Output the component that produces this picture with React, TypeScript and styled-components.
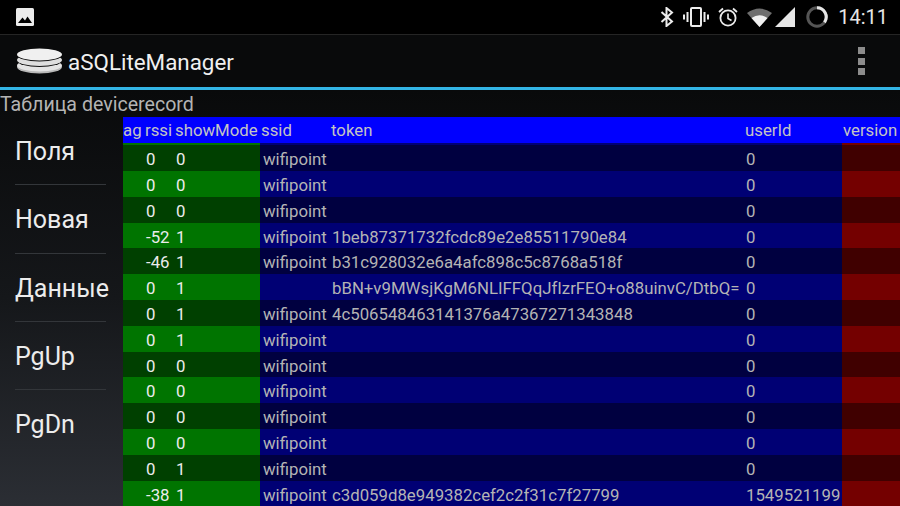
import React from 'react';
import styled, { createGlobalStyle } from 'styled-components';

const GlobalStyle = createGlobalStyle`
  html, body {
    margin: 0;
    padding: 0;
    background: #000;
  }
  body {
    font-family: Roboto, "Noto Sans", sans-serif;
    overflow: hidden;
  }
`;

type Tone = 'green' | 'blue' | 'red';

const COLOURS: Record<Tone, { dark: string; light: string }> = {
  green: { dark: '#004000', light: '#007400' },
  blue: { dark: '#000040', light: '#000074' },
  red: { dark: '#400000', light: '#740000' },
};

const COLUMNS = '21px 31px 85px 70px 414px 98px 58px';

const rows = [
  { rssi: '0', show: '0', ssid: 'wifipoint', token: '', user: '0' },
  { rssi: '0', show: '0', ssid: 'wifipoint', token: '', user: '0' },
  { rssi: '0', show: '0', ssid: 'wifipoint', token: '', user: '0' },
  { rssi: '-52', show: '1', ssid: 'wifipoint', token: '1beb87371732fcdc89e2e85511790e84', user: '0' },
  { rssi: '-46', show: '1', ssid: 'wifipoint', token: 'b31c928032e6a4afc898c5c8768a518f', user: '0' },
  { rssi: '0', show: '1', ssid: '', token: 'bBN+v9MWsjKgM6NLIFFQqJfIzrFEO+o88uinvC/DtbQ=', user: '0' },
  { rssi: '0', show: '1', ssid: 'wifipoint', token: '4c506548463141376a47367271343848', user: '0' },
  { rssi: '0', show: '1', ssid: 'wifipoint', token: '', user: '0' },
  { rssi: '0', show: '0', ssid: 'wifipoint', token: '', user: '0' },
  { rssi: '0', show: '0', ssid: 'wifipoint', token: '', user: '0' },
  { rssi: '0', show: '0', ssid: 'wifipoint', token: '', user: '0' },
  { rssi: '0', show: '0', ssid: 'wifipoint', token: '', user: '0' },
  { rssi: '0', show: '1', ssid: 'wifipoint', token: '', user: '0' },
  { rssi: '-38', show: '1', ssid: 'wifipoint', token: 'c3d059d8e949382cef2c2f31c7f27799', user: '1549521199' },
];

const Screen = styled.div`
  width: 900px;
  height: 506px;
  display: flex;
  flex-direction: column;
  overflow: hidden;
`;

const StatusBar = styled.div`
  height: 34px;
  flex: none;
  background: #000;
  border-bottom: 1px solid #252525;
  display: flex;
  align-items: center;
  padding: 0 12px 0 16px;
`;

const StatusIcons = styled.div`
  margin-left: auto;
  display: flex;
  align-items: center;
`;

const StatusSlot = styled.span<{ $gap: number }>`
  display: flex;
  margin-right: ${(p) => p.$gap}px;
`;

const Clock = styled.span`
  font-size: 20px;
  color: #e6e6e6;
`;

const ActionBar = styled.div`
  height: 52px;
  flex: none;
  background: #090a0b;
  border-bottom: 3px solid #33b5e5;
  display: flex;
  align-items: center;
  padding: 0 35px 0 17px;
`;

const AppTitle = styled.h1`
  margin: 2px 0 0 6px;
  font-size: 22.4px;
  font-weight: 400;
  color: #f0f0f0;
`;

const Overflow = styled.div`
  margin-left: auto;
  display: flex;
  flex-direction: column;
  gap: 3.5px;
`;

const OverflowDot = styled.span`
  width: 7px;
  height: 7px;
  background: #8c8c8c;
`;

const Content = styled.div`
  flex: 1;
  min-height: 0;
  display: flex;
  flex-direction: column;
  background: linear-gradient(180deg, #090a0b 0%, #15171a 50%, #2b2e34 100%);
`;

const TableTitle = styled.div`
  height: 27px;
  flex: none;
  font-size: 19.6px;
  line-height: 29px;
  color: #b4b4b4;
  white-space: nowrap;
`;

const Body = styled.div`
  flex: 1;
  min-height: 0;
  display: flex;
`;

const Sidebar = styled.nav`
  width: 123px;
  flex: none;
  display: flex;
  flex-direction: column;
`;

const SideItem = styled.div`
  height: 68.3px;
  box-sizing: border-box;
  margin-left: 15px;
  width: 91px;
  border-bottom: 1px solid #33363a;
  font-size: 25px;
  line-height: 70px;
  color: #ececec;
  white-space: nowrap;

  &:last-child {
    border-bottom: 0;
  }
`;

const Table = styled.div`
  flex: 1;
  min-width: 0;
  display: flex;
  flex-direction: column;
`;

const HeaderRow = styled.div`
  height: 26px;
  flex: none;
  background: #0000ff;
  display: grid;
  grid-template-columns: ${COLUMNS};
`;

const HeaderCell = styled.div<{ $pad?: number }>`
  font-size: 16.8px;
  line-height: 27px;
  color: #c4c4c4;
  white-space: nowrap;
  padding-left: ${(p) => p.$pad ?? 1}px;
`;

const Row = styled.div<{ $first?: boolean }>`
  height: ${(p) => (p.$first ? 28 : 25.8)}px;
  flex: none;
  display: grid;
  grid-template-columns: ${COLUMNS};
`;

const Cell = styled.div<{ $tone: Tone; $odd: boolean; $first?: boolean; $pad?: number }>`
  background: ${(p) => (p.$odd ? COLOURS[p.$tone].dark : COLOURS[p.$tone].light)};
  color: ${(p) => (p.$tone === 'green' ? '#ececec' : '#b4b4b4')};
  font-size: 16.8px;
  line-height: 28px;
  padding-left: ${(p) => p.$pad ?? 2}px;
  white-space: nowrap;
  box-sizing: border-box;
  ${(p) => (p.$first ? `border-top: 2px solid ${COLOURS[p.$tone].light};` : '')}
`;

const ImageIcon = () => (
  <svg width="18" height="18" viewBox="0 0 18 18">
    <rect width="18" height="18" rx="1.5" fill="#ececec" />
    <path d="M2 15 L6.5 9.5 L9 12.5 L11.5 8.5 L16 15 Z" fill="#000" />
  </svg>
);

const DbIcon = () => (
  <svg width="45" height="26" viewBox="0 0 45 26">
    <ellipse cx="22.5" cy="19" rx="22.5" ry="6.5" fill="#b8b8b8" />
    <ellipse cx="22.5" cy="17.5" rx="22.5" ry="6" fill="#e4e4e4" />
    <ellipse cx="22.5" cy="12.5" rx="22.5" ry="6.5" fill="#111" />
    <ellipse cx="22.5" cy="12" rx="22.5" ry="6" fill="#dedede" />
    <ellipse cx="22.5" cy="7" rx="22.5" ry="6.5" fill="#111" />
    <ellipse cx="22.5" cy="6.5" rx="22.5" ry="6" fill="#f0f0f0" />
  </svg>
);

const BluetoothIcon = () => (
  <svg width="14" height="20" viewBox="0 0 14 20">
    <path d="M1.5 5 L12 14.5 L6.5 19 V1 L12 5.5 L1.5 15" fill="none" stroke="#ececec" strokeWidth="2" />
  </svg>
);

const VibrateIcon = () => (
  <svg width="26" height="20" viewBox="0 0 26 20">
    <rect x="8" y="1" width="10" height="18" rx="1" fill="none" stroke="#ececec" strokeWidth="2" />
    <path d="M4.5 5 V15 M21.5 5 V15 M1 7.5 V12.5 M25 7.5 V12.5" stroke="#ececec" strokeWidth="2" />
  </svg>
);

const AlarmIcon = () => (
  <svg width="20" height="20" viewBox="0 0 20 20">
    <circle cx="10" cy="11" r="7.6" fill="none" stroke="#ececec" strokeWidth="1.8" />
    <path d="M10 6.5 V11.5 L13.5 13.5" fill="none" stroke="#ececec" strokeWidth="1.6" />
    <path d="M1 5 L5 1.5 M19 5 L15 1.5" stroke="#ececec" strokeWidth="1.8" />
  </svg>
);

const WifiIcon = () => (
  <svg width="25" height="19" viewBox="0 0 25 19">
    <path d="M0 5 Q12.5 -4 25 5 L12.5 19 Z" fill="#6e6e6e" />
    <path d="M4.5 10 Q12.5 4.5 20.5 10 L12.5 19 Z" fill="#f0f0f0" />
  </svg>
);

const SignalIcon = () => (
  <svg width="20" height="20" viewBox="0 0 20 20">
    <path d="M0 20 L20 0 V20 Z" fill="#e6e6e6" />
  </svg>
);

const BatteryIcon = () => (
  <svg width="22" height="22" viewBox="0 0 22 22">
    <circle cx="11" cy="11" r="9.2" fill="none" stroke="#555" strokeWidth="3" />
    <path d="M11 1.8 A9.2 9.2 0 0 1 18.5 16.3" fill="none" stroke="#e6e6e6" strokeWidth="3" />
  </svg>
);

const App = () => (
  <Screen>
    <GlobalStyle />
    <StatusBar>
      <ImageIcon />
      <StatusIcons>
        <StatusSlot $gap={9}><BluetoothIcon /></StatusSlot>
        <StatusSlot $gap={9}><VibrateIcon /></StatusSlot>
        <StatusSlot $gap={9}><AlarmIcon /></StatusSlot>
        <StatusSlot $gap={3}><WifiIcon /></StatusSlot>
        <StatusSlot $gap={11}><SignalIcon /></StatusSlot>
        <StatusSlot $gap={10}><BatteryIcon /></StatusSlot>
        <Clock>14:11</Clock>
      </StatusIcons>
    </StatusBar>
    <ActionBar>
      <DbIcon />
      <AppTitle>aSQLiteManager</AppTitle>
      <Overflow>
        <OverflowDot />
        <OverflowDot />
        <OverflowDot />
      </Overflow>
    </ActionBar>
    <Content>
      <TableTitle>Таблица devicerecord</TableTitle>
      <Body>
        <Sidebar>
          {['Поля', 'Новая', 'Данные', 'PgUp', 'PgDn'].map((label) => (
            <SideItem key={label}>{label}</SideItem>
          ))}
        </Sidebar>
        <Table>
          <HeaderRow>
            <HeaderCell $pad={0}>ag</HeaderCell>
            <HeaderCell>rssi</HeaderCell>
            <HeaderCell $pad={0}>showMode</HeaderCell>
            <HeaderCell>ssid</HeaderCell>
            <HeaderCell>token</HeaderCell>
            <HeaderCell>userId</HeaderCell>
            <HeaderCell>version</HeaderCell>
          </HeaderRow>
          {rows.map((row, i) => {
            const odd = i % 2 === 0;
            const first = i === 0;
            return (
              <Row key={i} $first={first}>
                <Cell $tone="green" $odd={odd} $first={first} />
                <Cell $tone="green" $odd={odd} $first={first}>{row.rssi}</Cell>
                <Cell $tone="green" $odd={odd} $first={first} $pad={1}>{row.show}</Cell>
                <Cell $tone="blue" $odd={odd} $first={first} $pad={3}>{row.ssid}</Cell>
                <Cell $tone="blue" $odd={odd} $first={first}>{row.token}</Cell>
                <Cell $tone="blue" $odd={odd} $first={first}>{row.user}</Cell>
                <Cell $tone="red" $odd={odd} $first={first} />
              </Row>
            );
          })}
        </Table>
      </Body>
    </Content>
  </Screen>
);

export default App;
